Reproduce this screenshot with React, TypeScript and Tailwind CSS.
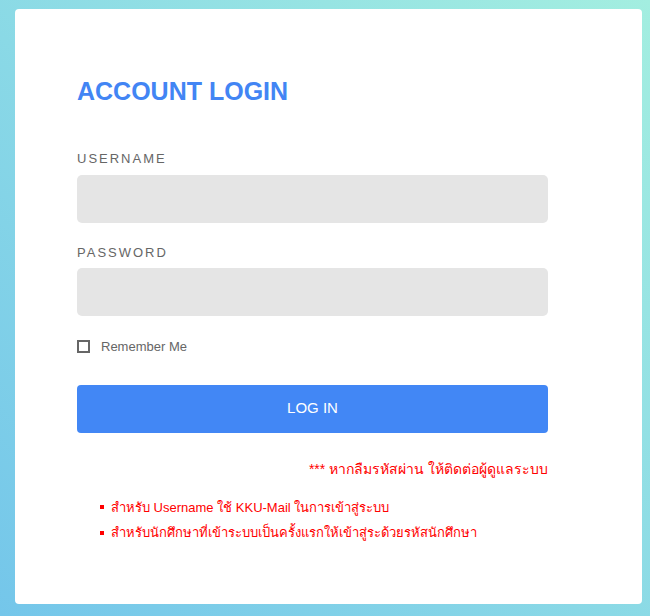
export default function App() {
  return (
    <div
      className="w-[650px] h-[616px] pt-[9px] pl-[15px] bg-gradient-to-tr from-[#74c6ea] to-[#a3eee0]"
      style={{ fontFamily: '"Liberation Sans", Arial, "Noto Sans", sans-serif' }}
    >
      <div className="w-[627px] h-[595px] bg-white rounded-[4px] pl-[62px] pt-[67px]">
        <div className="w-[471px]">
          <h1 className="text-[25px] leading-[30px] font-bold text-[#4285f4]">ACCOUNT LOGIN</h1>

          <form className="mt-[45px]">
            <label className="block text-[13px] leading-[16px] tracking-[2px] text-[#666] mb-[8px]">USERNAME</label>
            <input type="text" className="w-full h-[48px] bg-[#e5e5e5] rounded-[5px] px-3 outline-none" />

            <label className="block text-[13px] leading-[16px] tracking-[2px] text-[#666] mt-[22px] mb-[7px]">PASSWORD</label>
            <input type="password" className="w-full h-[48px] bg-[#e5e5e5] rounded-[5px] px-3 outline-none" />

            <label className="flex items-center mt-[21px] text-[13px] text-[#666]">
              <span className="w-[13px] h-[13px] border-2 border-[#666] bg-white" />
              <span className="ml-[11px]">Remember Me</span>
            </label>

            <button
              type="button"
              className="w-full h-[48px] mt-[28px] bg-[#4287f5] text-white text-[15px] rounded-[4px]"
            >
              LOG IN
            </button>
          </form>

          <p className="mt-[26px] text-right text-[14px] text-[#ff0000]">*** หากลืมรหัสผ่าน ให้ติดต่อผู้ดูแลระบบ</p>

          <ul className="mt-[18px] pl-[23px] text-[13px] text-[#ff0000] space-y-[6px]">
            <li className="flex items-center">
              <span className="w-[4px] h-[4px] bg-[#ff0000] mr-[7px]" />
              สำหรับ Username ใช้ KKU-Mail ในการเข้าสู่ระบบ
            </li>
            <li className="flex items-center">
              <span className="w-[4px] h-[4px] bg-[#ff0000] mr-[7px]" />
              สำหรับนักศึกษาที่เข้าระบบเป็นครั้งแรกให้เข้าสู่ระด้วยรหัสนักศึกษา
            </li>
          </ul>
        </div>
      </div>
    </div>
  );
}
